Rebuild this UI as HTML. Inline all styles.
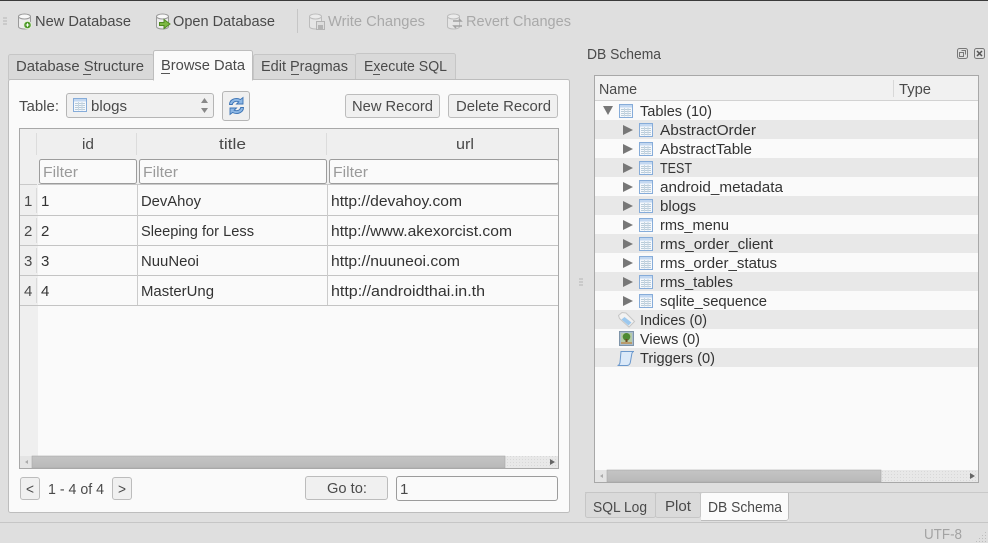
<!DOCTYPE html>
<html><head><meta charset="utf-8"><style>
html,body{margin:0;padding:0;background:#dfdfdf;overflow:hidden}
svg{display:block}
text{font-family:"Liberation Sans",sans-serif;font-size:15px;fill:#333}
.g{fill:#a9a9a9}.m{fill:#4a4a4a}.f{fill:#9a9a9a}
</style></head><body>
<svg width="988" height="543" viewBox="0 0 988 543" xmlns="http://www.w3.org/2000/svg">
<defs>
<symbol id="tb" viewBox="0 0 14 14" overflow="visible">
<rect x=".5" y=".5" width="13" height="13" fill="#f5f8fc" stroke="#86acd9"/>
<rect x="1" y="1" width="12" height="2.500" fill="#c3d8f1"/>
<path d="M2 5.500H12M2 7.500H12M2 9.500H12M2 11.500H12" stroke="#b9ccd9" fill="none"/>
<path d="M5.500 4V12.500M9 4V12.500" stroke="#c6d6e2" fill="none"/>
</symbol>
<symbol id="db" viewBox="0 0 16 17" overflow="visible">
<path d="M1.500 3.500V13.500C1.500 15.200 4.500 16 7.500 16S13.500 15.200 13.500 13.500V3.500Z" fill="#ececec" stroke="#9a9a9a"/>
<ellipse cx="7.500" cy="3.500" rx="6" ry="2.500" fill="#f8f8f8" stroke="#9a9a9a"/>
</symbol>
<linearGradient id="sb" x1="0" y1="0" x2="0" y2="1"><stop offset="0" stop-color="#c4c4c4"/><stop offset="1" stop-color="#b9b9b9"/></linearGradient>
<pattern id="dots" width="3" height="3" patternUnits="userSpaceOnUse"><rect width="3" height="3" fill="#e8e8e8"/><rect width="1" height="1" fill="#d8d8d8"/></pattern>
</defs>

<rect width="988" height="543" fill="#dfdfdf"/>
<rect width="988" height="1" fill="#3a3a3a"/>

<!-- toolbar -->
<path d="M3 18H7M3 21H7M3 24H7" stroke="#b5b5b5"/>
<use href="#db" x="17" y="13" width="16" height="17"/>
<circle cx="27.500" cy="25" r="3.800" fill="#4e9a28" stroke="#e4f2da"/>
<path d="M25.800 25H29.200M27.500 23.300V26.700" stroke="#fff"/>
<text x="35" y="26" textLength="96" lengthAdjust="spacingAndGlyphs" class="m">New Database</text>
<use href="#db" x="155" y="13" width="16" height="17"/>
<path d="M159.500 22.500H164V19.500L170 24L164 28.500V25.500H159.500Z" fill="#7db843" stroke="#4f8a20"/>
<text x="173" y="26" textLength="102" lengthAdjust="spacingAndGlyphs" class="m">Open Database</text>
<rect x="297" y="9" width="1" height="24" fill="#c6c6c6"/>
<g opacity=".5"><use href="#db" x="308" y="13" width="16" height="17"/>
<rect x="316.500" y="21.500" width="8" height="8" fill="#ddd" stroke="#888"/><rect x="318" y="25" width="5" height="4" fill="#888"/></g>
<text x="328" y="26" textLength="97" lengthAdjust="spacingAndGlyphs" class="g">Write Changes</text>
<g opacity=".5"><use href="#db" x="446" y="13" width="16" height="17"/>
<path d="M453 21H461L459 19M462 26H454L456 28" stroke="#666" fill="none" stroke-width="1.500"/></g>
<text x="466" y="26" textLength="105" lengthAdjust="spacingAndGlyphs" class="g">Revert Changes</text>

<!-- tabs left -->
<rect x="8.500" y="54.500" width="145" height="26" rx="2" fill="#d9d9d9" stroke="#c6c6c6"/>
<rect x="253.500" y="54.500" width="102" height="26" rx="2" fill="#d9d9d9" stroke="#c6c6c6"/>
<rect x="355.500" y="53.500" width="100" height="27" rx="2" fill="#d9d9d9" stroke="#c6c6c6"/>
<rect x="8.500" y="79.500" width="561" height="433" rx="2" fill="#fafafa" stroke="#bdbdbd"/>
<path d="M153.500 80V52.500a2 2 0 0 1 2-2H250.500a2 2 0 0 1 2 2V80Z" fill="#fafafa" stroke="#bdbdbd"/>
<rect x="154" y="78" width="98" height="4" fill="#fafafa"/>
<text x="16" y="71" textLength="128" lengthAdjust="spacingAndGlyphs" class="m">Database Structure</text>
<rect x="83" y="74" width="8" height="1" fill="#555"/>
<text x="161" y="70" textLength="84" lengthAdjust="spacingAndGlyphs" class="m">Browse Data</text>
<rect x="161" y="73" width="9" height="1" fill="#555"/>
<text x="261" y="71" textLength="87" lengthAdjust="spacingAndGlyphs" class="m">Edit Pragmas</text>
<rect x="291" y="74" width="8" height="1" fill="#555"/>
<text x="364" y="71" textLength="83" lengthAdjust="spacingAndGlyphs" class="m">Execute SQL</text>
<rect x="373" y="74" width="7" height="1" fill="#555"/>

<!-- browse controls -->
<text x="19" y="111" textLength="40" lengthAdjust="spacingAndGlyphs" class="m">Table:</text>
<rect x="66.500" y="93.500" width="147" height="24" rx="2.500" fill="#f0f0f0" stroke="#b5b5b5"/>
<use href="#tb" x="73" y="98" width="14" height="14"/>
<text x="91" y="111" textLength="36" lengthAdjust="spacingAndGlyphs" class="m">blogs</text>
<path d="M201 103L204.500 98L208 103ZM201 108L204.500 113L208 108Z" fill="#888"/>
<rect x="222.500" y="91.500" width="27" height="29" rx="2.500" fill="#f0f0f0" stroke="#b5b5b5"/>
<path d="M229.500 104.500C229.500 99.500 235.500 97 240.500 99.500L243 97.500V104H236.500L238.800 101.800C235.500 100.500 232.800 102 232.300 104.500Z" fill="#8db7e4" stroke="#3a72b4" stroke-width=".9"/>
<path d="M243.500 107.500C243.500 112.500 237.500 115 232.500 112.500L230 114.500V108H236.500L234.200 110.200C237.500 111.500 240.200 110 240.700 107.500Z" fill="#8db7e4" stroke="#3a72b4" stroke-width=".9"/>
<rect x="345.500" y="94.500" width="94" height="23" rx="2.500" fill="#f0f0f0" stroke="#bcbcbc"/>
<text x="352" y="111" textLength="81" lengthAdjust="spacingAndGlyphs" class="m">New Record</text>
<rect x="448.500" y="94.500" width="109" height="23" rx="2.500" fill="#f0f0f0" stroke="#bcbcbc"/>
<text x="456" y="111" textLength="95" lengthAdjust="spacingAndGlyphs" class="m">Delete Record</text>

<!-- grid -->
<rect x="19.500" y="128.500" width="539" height="340" fill="#fafafa" stroke="#a8a8a8"/>
<rect x="20" y="129" width="538" height="55" fill="#efefef"/>
<rect x="20" y="184" width="18" height="272" fill="#efefef"/>
<path d="M36.500 133V155M136.500 133V155M326.500 133V155" stroke="#dcdcdc"/>
<text x="82" y="149" textLength="12" lengthAdjust="spacingAndGlyphs" class="m">id</text>
<text x="219" y="149" textLength="27" lengthAdjust="spacingAndGlyphs" class="m">title</text>
<text x="456" y="149" textLength="18" lengthAdjust="spacingAndGlyphs" class="m">url</text>
<rect x="39.500" y="159.500" width="97" height="24" rx="2" fill="#fafafa" stroke="#9c9c9c"/>
<rect x="139.500" y="159.500" width="187" height="24" rx="2" fill="#fafafa" stroke="#9c9c9c"/>
<rect x="329.500" y="159.500" width="229" height="24" rx="2" fill="#fafafa" stroke="#9c9c9c"/>
<rect x="558" y="159" width="1" height="25" fill="#a8a8a8"/>
<text x="43" y="177" textLength="35" lengthAdjust="spacingAndGlyphs" class="f">Filter</text>
<text x="143" y="177" textLength="35" lengthAdjust="spacingAndGlyphs" class="f">Filter</text>
<text x="333" y="177" textLength="35" lengthAdjust="spacingAndGlyphs" class="f">Filter</text>
<rect x="20" y="184" width="17" height="1" fill="#c9c9c9"/><rect x="38" y="184" width="520" height="1" fill="#c9c9c9"/>
<path d="M20 215.500H558M20 245.500H558M20 275.500H558M20 305.500H558" stroke="#c4c4c4"/>
<path d="M137.500 185V305M327.500 185V305" stroke="#cbcbcb"/>
<path d="M36.500 188V213M36.500 218V243M36.500 248V273M36.500 278V303" stroke="#dadada"/>
<text x="24" y="206" class="m">1</text>
<text x="24" y="236" class="m">2</text>
<text x="24" y="266" class="m">3</text>
<text x="24" y="296" class="m">4</text>
<text x="41" y="206">1</text>
<text x="41" y="236">2</text>
<text x="41" y="266">3</text>
<text x="41" y="296">4</text>
<text x="141" y="206" textLength="60" lengthAdjust="spacingAndGlyphs">DevAhoy</text>
<text x="141" y="236" textLength="113" lengthAdjust="spacingAndGlyphs">Sleeping for Less</text>
<text x="141" y="266" textLength="58" lengthAdjust="spacingAndGlyphs">NuuNeoi</text>
<text x="141" y="296" textLength="73" lengthAdjust="spacingAndGlyphs">MasterUng</text>
<text x="331" y="206" textLength="131" lengthAdjust="spacingAndGlyphs">http://devahoy.com</text>
<text x="331" y="236" textLength="181" lengthAdjust="spacingAndGlyphs">http://www.akexorcist.com</text>
<text x="331" y="266" textLength="129" lengthAdjust="spacingAndGlyphs">http://nuuneoi.com</text>
<text x="331" y="296" textLength="154" lengthAdjust="spacingAndGlyphs">http://androidthai.in.th</text>
<!-- grid scrollbar -->
<rect x="20" y="456" width="538" height="12" fill="url(#dots)"/>
<rect x="20" y="456" width="12" height="12" fill="#e4e4e4"/>
<rect x="32" y="456" width="473" height="12" fill="url(#sb)" stroke="#a9a9a9" stroke-width=".6"/>
<path d="M28 460V464L25 462Z" fill="#aaa"/><path d="M550 459V465L555 462Z" fill="#666"/>

<!-- pager -->
<rect x="20.500" y="477.500" width="19" height="22" rx="2.500" fill="#f0f0f0" stroke="#bcbcbc"/>
<text x="26" y="494" textLength="8" lengthAdjust="spacingAndGlyphs" class="m">&lt;</text>
<text x="48" y="494" textLength="56" lengthAdjust="spacingAndGlyphs" class="m">1 - 4 of 4</text>
<rect x="112.500" y="477.500" width="19" height="22" rx="2.500" fill="#f0f0f0" stroke="#bcbcbc"/>
<text x="118" y="494" textLength="8" lengthAdjust="spacingAndGlyphs" class="m">&gt;</text>
<rect x="305.500" y="476.500" width="82" height="23" rx="2.500" fill="#f0f0f0" stroke="#bcbcbc"/>
<text x="327" y="493" textLength="40" lengthAdjust="spacingAndGlyphs" class="m">Go to:</text>
<rect x="396.500" y="476.500" width="161" height="24" rx="2.500" fill="#fafafa" stroke="#9c9c9c"/>
<text x="400" y="494" class="m">1</text>

<!-- splitter -->
<path d="M579 279H583M579 282H583M579 285H583" stroke="#b5b5b5"/>

<!-- dock -->
<text x="587" y="59" textLength="74" lengthAdjust="spacingAndGlyphs" class="m">DB Schema</text>
<rect x="957.500" y="48.500" width="10" height="10" rx="2" fill="none" stroke="#777"/>
<path d="M961.500 50.500H965.500V54.500M959.500 52.500H963.500V56.500H959.500Z" fill="none" stroke="#777"/>
<rect x="974.500" y="48.500" width="10" height="10" rx="2" fill="none" stroke="#777"/>
<path d="M977 51L982 56M982 51L977 56" stroke="#555" stroke-width="1.500"/>

<rect x="594.500" y="75.500" width="384" height="407" fill="#fafafa" stroke="#a8a8a8"/>
<rect x="595" y="76" width="383" height="24" fill="#f1f1f1"/>
<rect x="595" y="100" width="383" height="1" fill="#d2d2d2"/>
<rect x="893" y="80" width="1" height="17" fill="#d8d8d8"/>
<text x="599" y="94" textLength="38" lengthAdjust="spacingAndGlyphs" class="m">Name</text>
<text x="899" y="94" textLength="32" lengthAdjust="spacingAndGlyphs" class="m">Type</text>
<g fill="#e8e8e8">
<rect x="595" y="120" width="383" height="19"/><rect x="595" y="158" width="383" height="19"/><rect x="595" y="196" width="383" height="19"/><rect x="595" y="234" width="383" height="19"/><rect x="595" y="272" width="383" height="19"/><rect x="595" y="310" width="383" height="19"/><rect x="595" y="348" width="383" height="19"/>
</g>
<path d="M603 106H613L608 115Z" fill="#777"/>
<use href="#tb" x="619" y="104" width="14" height="14"/>
<text x="640" y="116" textLength="72" lengthAdjust="spacingAndGlyphs">Tables (10)</text>
<g fill="#777">
<path d="M623 125L633 130L623 135Z"/><path d="M623 144L633 149L623 154Z"/><path d="M623 163L633 168L623 173Z"/><path d="M623 182L633 187L623 192Z"/><path d="M623 201L633 206L623 211Z"/><path d="M623 220L633 225L623 230Z"/><path d="M623 239L633 244L623 249Z"/><path d="M623 258L633 263L623 268Z"/><path d="M623 277L633 282L623 287Z"/><path d="M623 296L633 301L623 306Z"/>
</g>
<use href="#tb" x="639" y="123" width="14" height="14"/><use href="#tb" x="639" y="142" width="14" height="14"/><use href="#tb" x="639" y="161" width="14" height="14"/><use href="#tb" x="639" y="180" width="14" height="14"/><use href="#tb" x="639" y="199" width="14" height="14"/><use href="#tb" x="639" y="218" width="14" height="14"/><use href="#tb" x="639" y="237" width="14" height="14"/><use href="#tb" x="639" y="256" width="14" height="14"/><use href="#tb" x="639" y="275" width="14" height="14"/><use href="#tb" x="639" y="294" width="14" height="14"/>
<text x="660" y="135" textLength="96" lengthAdjust="spacingAndGlyphs">AbstractOrder</text>
<text x="660" y="154" textLength="92" lengthAdjust="spacingAndGlyphs">AbstractTable</text>
<text x="660" y="173" textLength="32" lengthAdjust="spacingAndGlyphs">TEST</text>
<text x="660" y="192" textLength="123" lengthAdjust="spacingAndGlyphs">android_metadata</text>
<text x="660" y="211" textLength="36" lengthAdjust="spacingAndGlyphs">blogs</text>
<text x="660" y="230" textLength="69" lengthAdjust="spacingAndGlyphs">rms_menu</text>
<text x="660" y="249" textLength="113" lengthAdjust="spacingAndGlyphs">rms_order_client</text>
<text x="660" y="268" textLength="117" lengthAdjust="spacingAndGlyphs">rms_order_status</text>
<text x="660" y="287" textLength="73" lengthAdjust="spacingAndGlyphs">rms_tables</text>
<text x="660" y="306" textLength="107" lengthAdjust="spacingAndGlyphs">sqlite_sequence</text>
<path d="M618.500 315.500L622 312.500L626 313L634.500 321.500L629 327L619.500 318.500Z" fill="#f2f2f2" stroke="#c6c6c6"/>
<path d="M624.500 317L631.500 322.500L628.500 325.500L621.500 319.500Z" fill="#9cc8ee"/>
<text x="640" y="325" textLength="67" lengthAdjust="spacingAndGlyphs">Indices (0)</text>
<rect x="619.500" y="331.500" width="14" height="14" fill="#a9bccd" stroke="#7f94a8"/>
<rect x="621" y="333" width="11" height="11" fill="#b5cba6"/>
<circle cx="626.500" cy="336.800" r="3.800" fill="#4e8a33"/><rect x="625.500" y="339" width="2" height="3.500" fill="#6b4a22"/>
<rect x="621" y="342" width="11" height="2" fill="#b89a6a"/>
<text x="640" y="344" textLength="60" lengthAdjust="spacingAndGlyphs">Views (0)</text>
<path d="M621 351.500H634C632.500 351.500 632 353 631.800 354L630.300 362.500C630 364 628.800 365.500 627 365.500H617.500C619 365.500 619.700 364 620 362.500Z" fill="#dbe9f8" stroke="#6b98cc"/>
<text x="640" y="363" textLength="75" lengthAdjust="spacingAndGlyphs">Triggers (0)</text>
<!-- schema scrollbar -->
<rect x="595" y="470" width="383" height="12" fill="url(#dots)"/>
<rect x="595" y="470" width="12" height="12" fill="#e4e4e4"/>
<rect x="607" y="470" width="274" height="12" fill="url(#sb)" stroke="#a9a9a9" stroke-width=".6"/>
<path d="M603 474V478L600 476Z" fill="#aaa"/><path d="M970 473V479L975 476Z" fill="#666"/>

<!-- bottom tabs -->
<rect x="585" y="492" width="403" height="1" fill="#c9c9c9"/>
<rect x="585.500" y="492.500" width="70" height="25" rx="2" fill="#dadada" stroke="#c6c6c6"/>
<rect x="655.500" y="492.500" width="45" height="25" rx="2" fill="#dadada" stroke="#c6c6c6"/>
<rect x="701" y="493" width="88" height="28" rx="2" fill="#fbfbfb"/>
<path d="M701 520.500H786a2.500 2.500 0 0 0 2.500-2.500V493" fill="none" stroke="#bdbdbd"/>
<text x="593" y="512" textLength="54" lengthAdjust="spacingAndGlyphs" class="m">SQL Log</text>
<text x="665" y="511" textLength="26" lengthAdjust="spacingAndGlyphs" class="m">Plot</text>
<text x="708" y="512" textLength="74" lengthAdjust="spacingAndGlyphs" class="m">DB Schema</text>

<!-- status -->
<rect x="0" y="522" width="988" height="1" fill="#c6c6c6"/>
<text x="924" y="539" textLength="38" lengthAdjust="spacingAndGlyphs" style="fill:#a3a3a3">UTF-8</text>
<g fill="#bdbdbd"><rect x="985" y="532" width="1" height="1"/><rect x="982" y="535" width="1" height="1"/><rect x="985" y="535" width="1" height="1"/><rect x="979" y="538" width="1" height="1"/><rect x="982" y="538" width="1" height="1"/><rect x="985" y="538" width="1" height="1"/><rect x="976" y="541" width="1" height="1"/><rect x="979" y="541" width="1" height="1"/><rect x="982" y="541" width="1" height="1"/><rect x="985" y="541" width="1" height="1"/></g>
</svg>
</body></html>
